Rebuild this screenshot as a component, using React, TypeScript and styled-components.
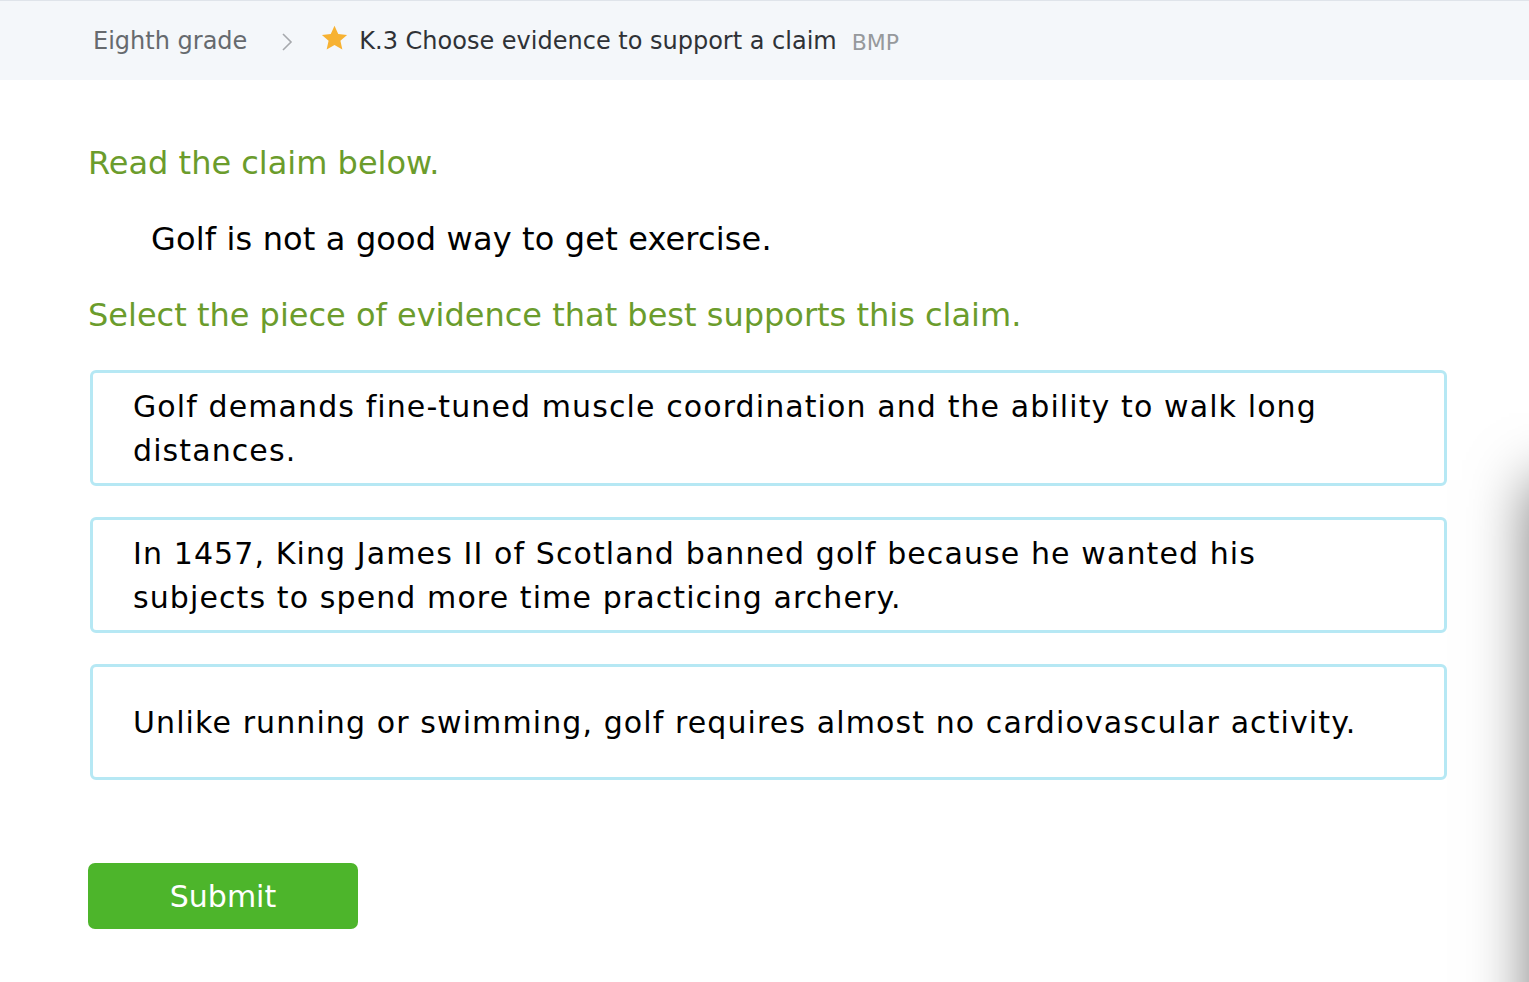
import React from "react";
import styled, { createGlobalStyle } from "styled-components";

const GlobalStyle = createGlobalStyle`
  html, body {
    margin: 0;
    padding: 0;
    overflow: hidden;
    background: #ffffff;
  }
  body {
    font-family: "DejaVu Sans", Verdana, sans-serif;
  }
`;

const options = [
  "Golf demands fine-tuned muscle coordination and the ability to walk long distances.",
  "In 1457, King James II of Scotland banned golf because he wanted his subjects to spend more time practicing archery.",
  "Unlike running or swimming, golf requires almost no cardiovascular activity.",
];

export default function App() {
  return (
    <StPage>
      <GlobalStyle />
      <StHeader>
        <StCrumb>Eighth grade</StCrumb>
        <StChevron viewBox="0 0 12 20" aria-hidden>
          <path d="M2 2 L10 10 L2 18" fill="none" stroke="#a6a9ad" strokeWidth="1.6" />
        </StChevron>
        <StStar viewBox="0 0 24 24" aria-hidden>
          <path
            d="M12 1.5 L15.1 8.2 L22.4 9 L16.9 13.9 L18.5 21.1 L12 17.4 L5.5 21.1 L7.1 13.9 L1.6 9 L8.9 8.2 Z"
            fill="#f7b232"
          />
        </StStar>
        <StSkill>K.3 Choose evidence to support a claim</StSkill>
        <StCode>BMP</StCode>
      </StHeader>
      <StMain>
        <StPrompt>Read the claim below.</StPrompt>
        <StClaim>Golf is not a good way to get exercise.</StClaim>
        <StPrompt>Select the piece of evidence that best supports this claim.</StPrompt>
        <StOptions>
          {options.map((text) => (
            <StOption key={text}>{text}</StOption>
          ))}
        </StOptions>
        <StSubmit>Submit</StSubmit>
      </StMain>
      <StSidePanel />
    </StPage>
  );
}

const StPage = styled.div`
  min-height: 982px;
`;

const StHeader = styled.header`
  height: 80px;
  box-sizing: border-box;
  border-top: 1px solid #dfe4ea;
  background: #f4f7fa;
  display: flex;
  align-items: center;
  padding-left: 93px;
`;

const StCrumb = styled.span`
  font-size: 24px;
  color: #666a6e;
`;

const StChevron = styled.svg`
  width: 12px;
  height: 20px;
  margin: 2px 27px 0 34px;
`;

const StStar = styled.svg`
  width: 29px;
  height: 29px;
  margin-right: 10px;
  margin-top: -4px;
`;

const StSkill = styled.span`
  font-size: 24px;
  color: #2f3236;
`;

const StCode = styled.span`
  font-size: 22px;
  color: #96999c;
  margin-left: 15px;
  margin-top: 3px;
`;

const StMain = styled.main`
  padding: 62px 82px 0 88px;
`;

const StPrompt = styled.h2`
  margin: 0 0 34px;
  font-size: 32px;
  line-height: 42px;
  font-weight: normal;
  color: #6b9c2c;
`;

const StClaim = styled.p`
  margin: 0 0 34px;
  padding-left: 63px;
  font-size: 32px;
  line-height: 42px;
  letter-spacing: 0.15px;
  color: #000000;
`;

const StOptions = styled.div`
  display: flex;
  flex-direction: column;
  gap: 31px;
  margin-left: 2px;
`;

const StOption = styled.div`
  box-sizing: border-box;
  min-height: 116px;
  display: flex;
  align-items: center;
  padding: 12px 60px 10px 40px;
  border: 3px solid #b6e8f4;
  border-radius: 6px;
  font-size: 30px;
  line-height: 44px;
  letter-spacing: 1.1px;
  color: #000000;
  background: #ffffff;
`;

const StSubmit = styled.button`
  margin-top: 83px;
  width: 270px;
  height: 66px;
  border: none;
  border-radius: 7px;
  background: #4db52b;
  color: #ffffff;
  font-family: "DejaVu Sans", Verdana, sans-serif;
  font-size: 30px;
  cursor: pointer;
`;

const StSidePanel = styled.div`
  position: fixed;
  top: 480px;
  left: 100%;
  width: 300px;
  height: 800px;
  background: #ffffff;
  box-shadow: 0 0 55px rgba(0, 0, 0, 0.5);
`;
